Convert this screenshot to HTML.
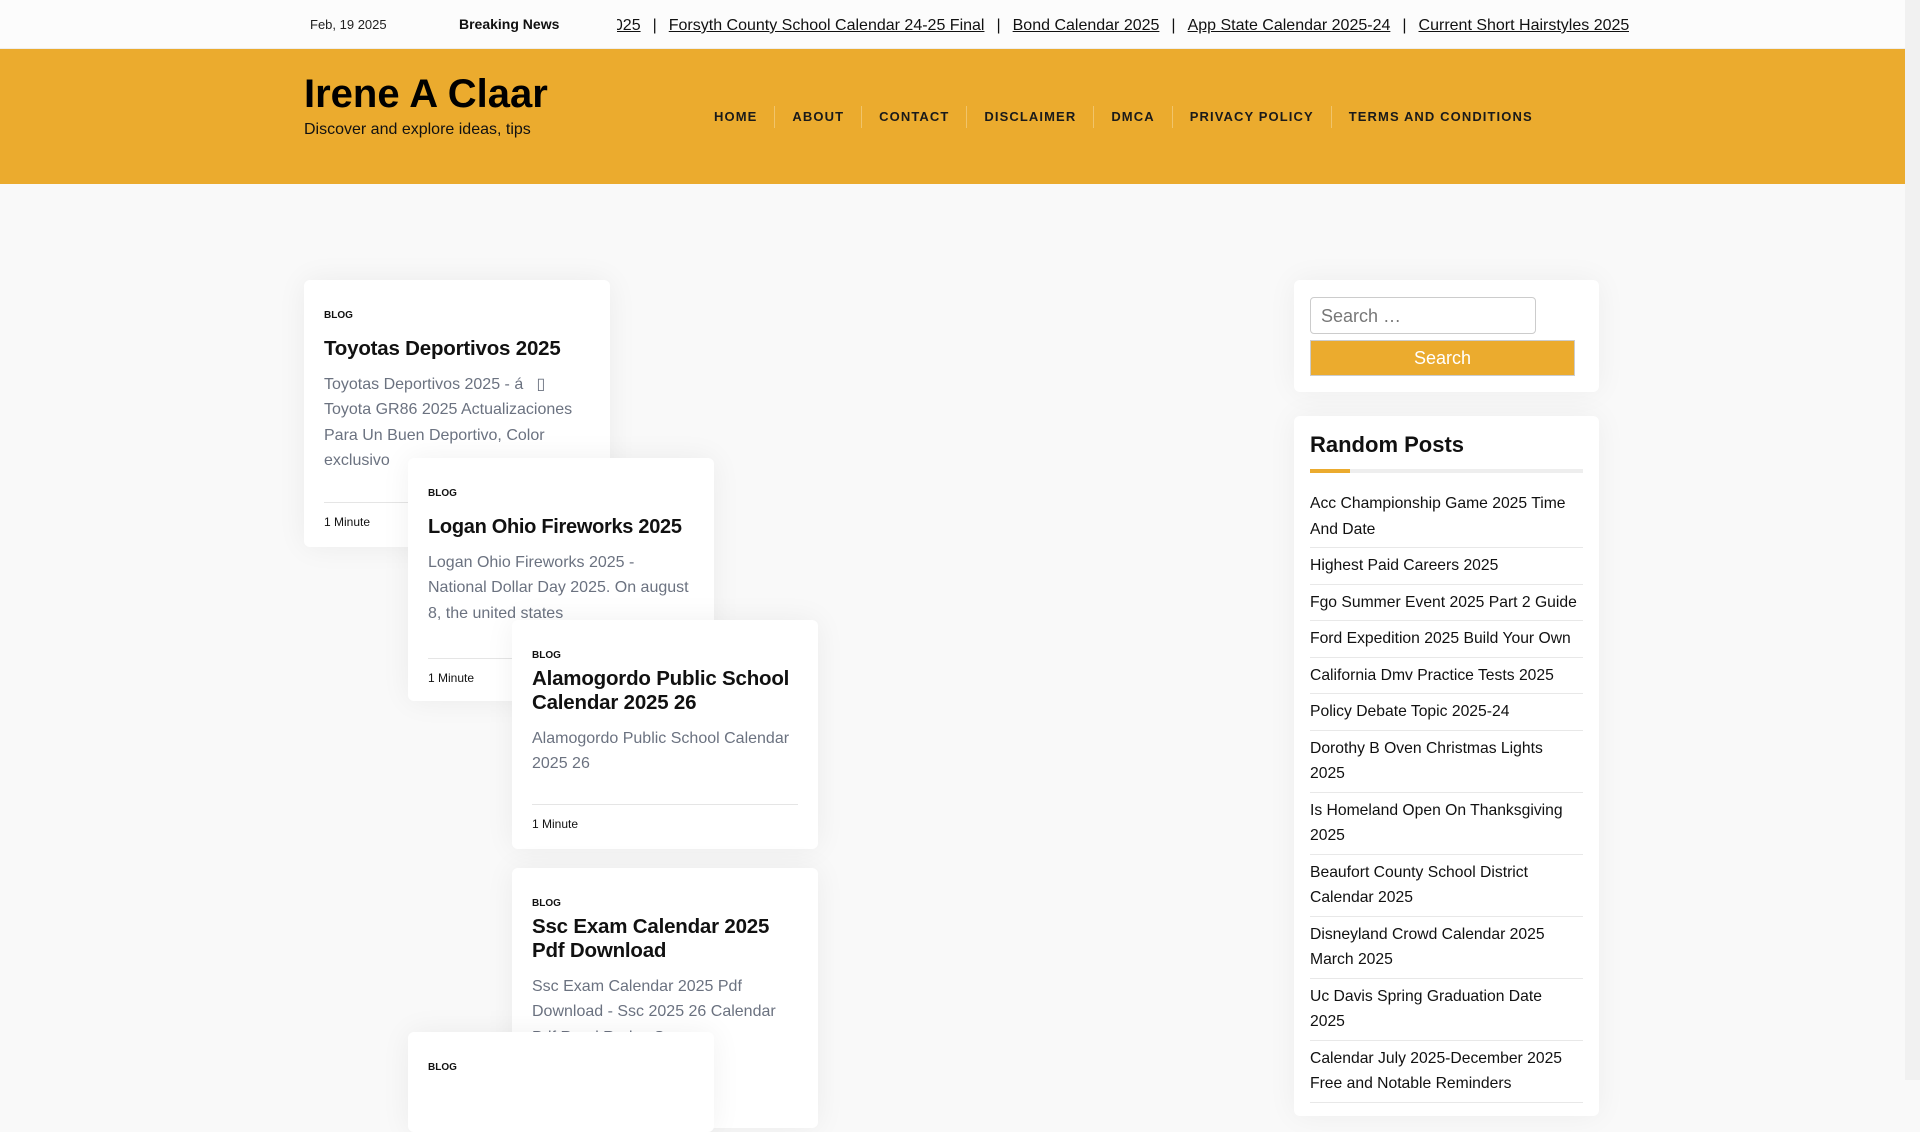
<!DOCTYPE html>
<html><head><meta charset="utf-8">
<style>
*{box-sizing:border-box;margin:0;padding:0}
body{width:1920px;height:1080px;overflow:hidden;background:#f9f9f9;font-family:"Liberation Sans",Arial,sans-serif;color:#111;position:relative}
.top{position:absolute;left:0;top:0;width:1905px;height:49px;background:#fcfcfc;border-bottom:1px solid #eee}
.date{position:absolute;left:310px;top:17px;font-size:13px;color:#222}
.bn{position:absolute;left:459px;top:16px;font-size:14px;font-weight:bold}
.tick{position:absolute;left:617px;top:17px;width:1012px;overflow:hidden;white-space:nowrap;font-size:16px}
.tick .in{margin-left:-12px}
.tick a{color:#111;text-decoration:underline}
.tick span{margin:0 12px}
.hdr{position:absolute;left:0;top:49px;width:1905px;height:135px;background:#ebab2e}
.logo{position:absolute;left:304px;top:23px;font-size:40px;font-weight:bold;color:#000}
.tag{position:absolute;left:304px;top:72px;font-size:16px;color:#111}
.nav{position:absolute;top:57px;left:697px;display:flex}
.nav div{font-size:13px;font-weight:bold;letter-spacing:1.1px;color:#1a1a1a;padding:0 17px;border-left:1px solid #f1c46a;line-height:22px}
.nav div:first-child{border-left:none}
.card{position:absolute;width:306px;background:#fff;border-radius:6px;box-shadow:0 0 30px rgba(0,0,0,.06);padding:0 20px}
.card .c{font-size:10px;font-weight:bold;margin-top:30px}
.card h2{font-size:20.5px;font-weight:bold;line-height:24px;margin-top:16px;letter-spacing:-0.2px}
.card p{font-size:16px;color:#6b7280;line-height:25.3px;margin-top:11px}
.card .m{border-top:1px solid #e5e5e5;margin-top:32px;padding-top:12px;font-size:12px;height:42px}
.w{position:absolute;left:1294px;width:305px;background:#fff;border-radius:6px;box-shadow:0 0 30px rgba(0,0,0,.05)}
.inp{position:absolute;left:16px;top:17px;width:226px;height:37px;border:1px solid #ccc;border-radius:4px;font-size:18px;color:#777;padding:8px 10px}
.btn{position:absolute;left:16px;top:60px;width:265px;height:36px;background:#ebab2e;border:1px solid #ccc;color:#fff;text-align:center;font-size:18px;line-height:34px}
.w h3{font-size:22px;font-weight:bold;margin:16px 16px 0}
.ul{margin:11px 16px 0;height:4px;background:#eee;position:relative}
.ul:before{content:"";position:absolute;left:0;top:0;width:40px;height:4px;background:#ebab2e}
.li{margin:0 16px;padding:5px 3px 5px 0;border-bottom:1px solid #e8e8e8;font-size:15.7px;line-height:25.5px;color:#111}
.sb{position:absolute;right:0;top:0;width:15px;height:1080px;background:#f1f1f1}
</style></head><body>
<div class="top">
<div class="date">Feb, 19 2025</div>
<div class="bn">Breaking News</div>
<div class="tick"><div class="in"><a>2025</a><span>|</span><a>Forsyth County School Calendar 24-25 Final</a><span>|</span><a>Bond Calendar 2025</a><span>|</span><a>App State Calendar 2025-24</a><span>|</span><a>Current Short Hairstyles 2025 Calendar</a></div></div>
</div>
<div class="hdr">
<div class="logo">Irene A Claar</div>
<div class="tag">Discover and explore ideas, tips</div>
<div class="nav"><div>HOME</div><div>ABOUT</div><div>CONTACT</div><div>DISCLAIMER</div><div>DMCA</div><div>PRIVACY POLICY</div><div>TERMS AND CONDITIONS</div></div>
</div>

<div class="card" style="left:304px;top:280px;height:267px"><div class="c">BLOG</div><h2>Toyotas Deportivos 2025</h2><p>Toyotas Deportivos 2025 - á &nbsp; ▯ Toyota GR86 2025 Actualizaciones Para Un Buen Deportivo, Color exclusivo</p><div class="m" style="margin-top:29px">1 Minute</div></div>
<div class="card" style="left:408px;top:458px;height:243px"><div class="c">BLOG</div><h2 style="font-size:20px;letter-spacing:-0.3px;white-space:nowrap">Logan Ohio Fireworks 2025</h2><p>Logan Ohio Fireworks 2025 - National Dollar Day 2025. On august 8, the united states</p><div class="m">1 Minute</div></div>
<div class="card" style="left:512px;top:620px;height:229px"><div class="c">BLOG</div><h2 style="margin-top:6px">Alamogordo Public School Calendar 2025 26</h2><p>Alamogordo Public School Calendar 2025 26</p><div class="m" style="margin-top:27px">1 Minute</div></div>
<div class="card" style="left:512px;top:868px;height:260px"><div class="c">BLOG</div><h2 style="margin-top:6px">Ssc Exam Calendar 2025 Pdf Download</h2><p>Ssc Exam Calendar 2025 Pdf Download - Ssc 2025 26 Calendar Pdf Read Redux Suo</p></div>
<div class="card" style="left:408px;top:1032px;height:100px"><div class="c">BLOG</div></div>

<div class="w" style="top:280px;height:112px"><div class="inp">Search …</div><div class="btn">Search</div></div>
<div class="w" style="top:416px;height:700px">
<h3>Random Posts</h3><div class="ul"></div>
<div style="height:13px"></div>
<div class="li">Acc Championship Game 2025 Time And Date</div>
<div class="li">Highest Paid Careers 2025</div>
<div class="li">Fgo Summer Event 2025 Part 2 Guide</div>
<div class="li">Ford Expedition 2025 Build Your Own</div>
<div class="li">California Dmv Practice Tests 2025</div>
<div class="li">Policy Debate Topic 2025-24</div>
<div class="li">Dorothy B Oven Christmas Lights 2025</div>
<div class="li">Is Homeland Open On Thanksgiving 2025</div>
<div class="li">Beaufort County School District Calendar 2025</div>
<div class="li">Disneyland Crowd Calendar 2025 March 2025</div>
<div class="li">Uc Davis Spring Graduation Date 2025</div>
<div class="li">Calendar July 2025-December 2025 Free and Notable Reminders</div>
</div>
<div class="sb"></div>
</body></html>
